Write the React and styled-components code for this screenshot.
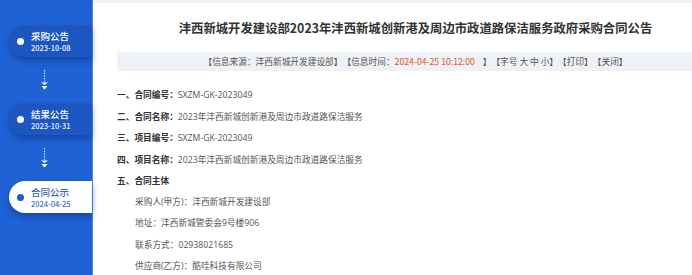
import React from "react";
import styled, { createGlobalStyle } from "styled-components";

const Global = createGlobalStyle`
  html, body { margin: 0; padding: 0; background: #fff; }
  body {
    font-family: "Noto Sans CJK SC", "Noto Sans", sans-serif;
    text-spacing-trim: space-all;
  }
  #root { height: 100vh; }
`;

const Page = styled.div`
  display: flex;
  height: 100vh;
  overflow: hidden;
`;

const Sidebar = styled.aside`
  width: 92px;
  flex: none;
  background: #1f62d6;
  border-right: 1px solid #4f86e2;
  padding-top: 25px;
  display: flex;
  flex-direction: column;
  align-items: stretch;
`;

const Pill = styled.div`
  margin-left: 9px;
  height: 32px;
  border-radius: 16px 0 0 16px;
  background: ${(p) => (p.$active ? "#ffffff" : "#1c56c0")};
  box-shadow: 0 4px 6px rgba(8, 40, 110, 0.45);
  display: flex;
  align-items: center;
  padding-left: 8px;
  gap: 7px;
`;

const Dot = styled.span`
  width: 7px;
  height: 7px;
  border-radius: 50%;
  background: ${(p) => (p.$active ? "#1f5cc8" : "#ffffff")};
  flex: none;
`;

const PillText = styled.div`
  display: flex;
  flex-direction: column;
  color: ${(p) => (p.$active ? "#3566b8" : "#ffffff")};
`;

const PillTitle = styled.span`
  font-size: 9.5px;
  line-height: 12px;
  font-weight: 500;
`;

const PillDate = styled.span`
  font-size: 7.5px;
  line-height: 10px;
  font-weight: 500;
  margin-top: 1px;
  opacity: 0.92;
`;

const Connector = styled.div`
  height: 46px;
  display: flex;
  align-items: center;
  padding-left: 40px;
`;

const Main = styled.main`
  flex: 1;
  min-width: 0;
  border-top: 3px solid #f1f1f3;
  overflow: hidden;
  padding-left: 24px;
`;

const Column = styled.div`
  width: 597px;
`;

const Title = styled.h1`
  margin: 0;
  height: 49px;
  display: flex;
  align-items: center;
  justify-content: center;
  font-size: 12.35px;
  font-weight: 700;
  color: #333;
  white-space: nowrap;
`;

const InfoBar = styled.div`
  height: 19px;
  line-height: 19px;
  background: #eef1f5;
  text-align: center;
  font-size: 8.7px;
  color: #555;
  white-space: pre;
`;

const Red = styled.span`
  color: #e8552e;
`;

const List = styled.div`
  margin-top: 13px;
  display: flex;
  flex-direction: column;
`;

const Row = styled.div`
  height: 21.5px;
  line-height: 21.5px;
  font-size: 8.7px;
  font-family: "Open Sans", "Noto Sans CJK SC", sans-serif;
  color: #555;
  white-space: nowrap;
  padding-left: ${(p) => (p.$sub ? "18px" : "0")};
`;

const Label = styled.span`
  font-family: "Noto Sans CJK SC", sans-serif;
  font-weight: 700;
  color: #333;
`;

function Arrow() {
  return (
    <svg width="9" height="20" viewBox="0 0 9 20">
      <line x1="4.5" y1="0" x2="4.5" y2="12" stroke="rgba(255,255,255,0.75)" strokeWidth="1.2" strokeDasharray="1.5 1.2" />
      <path d="M1 12.5 H8 L4.5 15 Z" fill="#fff" />
      <path d="M1.5 16 H7.5 L4.5 19.5 Z" fill="#fff" />
    </svg>
  );
}

const steps = [
  { title: "采购公告", date: "2023-10-08" },
  { title: "结果公告", date: "2023-10-31" },
  { title: "合同公示", date: "2024-04-25", active: true },
];

const rows = [
  { label: "一、合同编号：", value: "SXZM-GK-2023049" },
  { label: "二、合同名称：", value: "2023年沣西新城创新港及周边市政道路保洁服务" },
  { label: "三、项目编号：", value: "SXZM-GK-2023049" },
  { label: "四、项目名称：", value: "2023年沣西新城创新港及周边市政道路保洁服务" },
  { label: "五、合同主体", value: "" },
];

const subRows = [
  "采购人(甲方)：沣西新城开发建设部",
  "地址：沣西新城管委会9号楼906",
  "联系方式：02938021685",
  "供应商(乙方)：酷哇科技有限公司",
];

export default function App() {
  return (
    <>
      <Global />
      <Page>
        <Sidebar>
          {steps.map((s, i) => (
            <React.Fragment key={s.title}>
              {i > 0 && (
                <Connector>
                  <Arrow />
                </Connector>
              )}
              <Pill $active={s.active}>
                <Dot $active={s.active} />
                <PillText $active={s.active}>
                  <PillTitle>{s.title}</PillTitle>
                  <PillDate>{s.date}</PillDate>
                </PillText>
              </Pill>
            </React.Fragment>
          ))}
        </Sidebar>
        <Main>
          <Column>
            <Title>沣西新城开发建设部2023年沣西新城创新港及周边市政道路保洁服务政府采购合同公告</Title>
            <InfoBar>
              {"【信息来源：沣西新城开发建设部】【信息时间："}
              <Red>2024-04-25 10:12:00</Red>
              {"    】【字号 大 中 小】【打印】【关闭】"}
            </InfoBar>
            <List>
              {rows.map((r) => (
                <Row key={r.label}>
                  <Label>{r.label}</Label>
                  {r.value}
                </Row>
              ))}
              {subRows.map((t) => (
                <Row key={t} $sub>
                  {t}
                </Row>
              ))}
            </List>
          </Column>
        </Main>
      </Page>
    </>
  );
}
